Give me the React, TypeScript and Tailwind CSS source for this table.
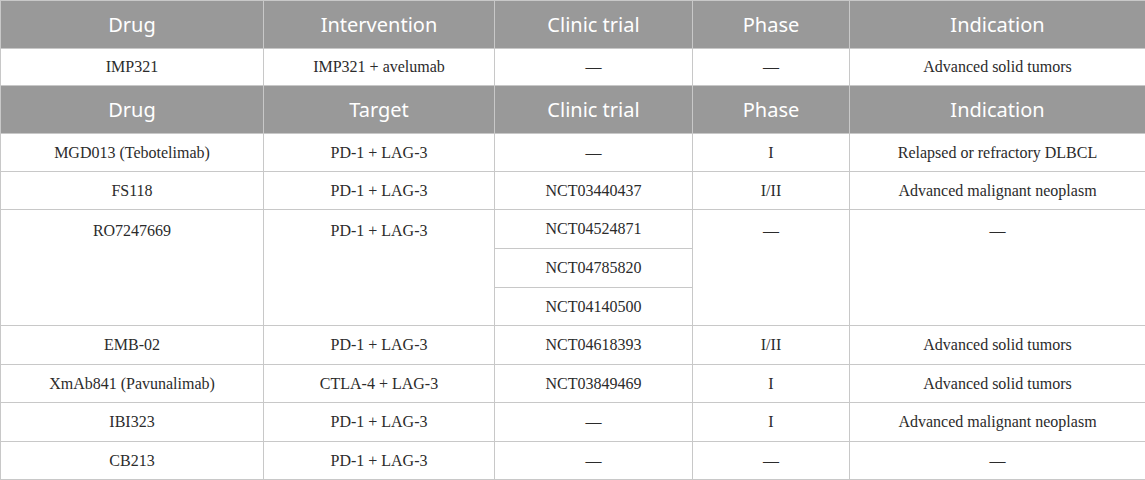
import React from "react";

const th = "bg-[#999999] text-white font-normal text-[20px] border border-[#c8c8c8] text-center align-middle p-0";
const td = "bg-white text-[#2b2b2b] text-[16px] border border-[#c8c8c8] text-center p-0";

function Header({ second }: { second: string }) {
  return (
    <tr className="h-[48px]" style={{ fontFamily: '"Noto Sans", sans-serif' }}>
      <th className={th}>Drug</th>
      <th className={th}>{second}</th>
      <th className={th}>Clinic trial</th>
      <th className={th}>Phase</th>
      <th className={th}>Indication</th>
    </tr>
  );
}

type Row = [string, string, string, string, string];

const rows: Row[] = [
  ["MGD013 (Tebotelimab)", "PD-1 + LAG-3", "—", "I", "Relapsed or refractory DLBCL"],
  ["FS118", "PD-1 + LAG-3", "NCT03440437", "I/II", "Advanced malignant neoplasm"],
];

const rows2: Row[] = [
  ["EMB-02", "PD-1 + LAG-3", "NCT04618393", "I/II", "Advanced solid tumors"],
  ["XmAb841 (Pavunalimab)", "CTLA-4 + LAG-3", "NCT03849469", "I", "Advanced solid tumors"],
  ["IBI323", "PD-1 + LAG-3", "—", "I", "Advanced malignant neoplasm"],
  ["CB213", "PD-1 + LAG-3", "—", "—", "—"],
];

function BodyRow({ r, h }: { r: Row; h: string }) {
  return (
    <tr className={h}>
      {r.map((c, i) => (
        <td key={i} className={td + " align-middle"}>
          {c}
        </td>
      ))}
    </tr>
  );
}

export default function App() {
  return (
    <div className="w-[1145px] h-[480px] overflow-hidden bg-white" style={{ fontFamily: '"Liberation Serif", serif' }}>
      <table className="w-[1145px] table-fixed border-collapse">
        <colgroup>
          <col className="w-[263px]" />
          <col className="w-[231px]" />
          <col className="w-[198px]" />
          <col className="w-[157px]" />
          <col className="w-[296px]" />
        </colgroup>
        <tbody>
          <Header second="Intervention" />
          <BodyRow r={["IMP321", "IMP321 + avelumab", "—", "—", "Advanced solid tumors"]} h="h-[37px]" />
          <Header second="Target" />
          <BodyRow r={rows[0]} h="h-[38px]" />
          <BodyRow r={rows[1]} h="h-[38px]" />
          <tr className="h-[39px]">
            <td rowSpan={3} className={td + " align-top pt-[9px]"}>RO7247669</td>
            <td rowSpan={3} className={td + " align-top pt-[9px]"}>PD-1 + LAG-3</td>
            <td className={td + " align-middle"}>NCT04524871</td>
            <td rowSpan={3} className={td + " align-top pt-[9px]"}>—</td>
            <td rowSpan={3} className={td + " align-top pt-[9px]"}>—</td>
          </tr>
          <tr className="h-[39px]">
            <td className={td + " align-middle"}>NCT04785820</td>
          </tr>
          <tr className="h-[38px]">
            <td className={td + " align-middle"}>NCT04140500</td>
          </tr>
          {rows2.map((r, i) => (
            <BodyRow key={i} r={r} h={i % 2 === 0 ? "h-[39px]" : "h-[38px]"} />
          ))}
        </tbody>
      </table>
    </div>
  );
}
